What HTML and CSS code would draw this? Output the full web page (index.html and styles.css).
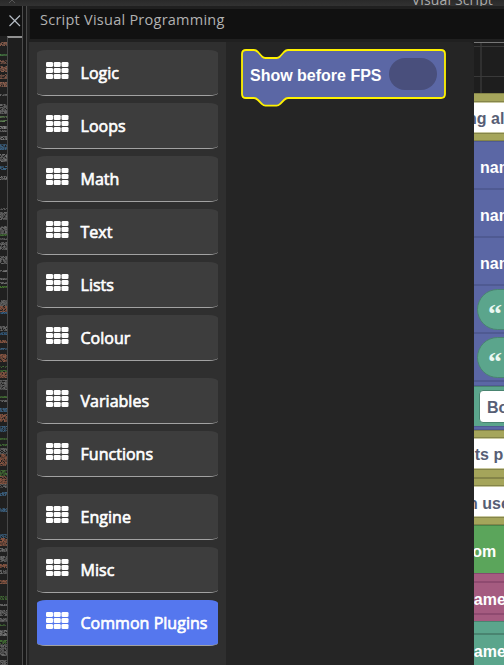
FILE: index.html
```html
<!DOCTYPE html>
<html lang="en">
<head>
<meta charset="utf-8">
<title>Script Visual Programming</title>
<link rel="stylesheet" href="styles.css">
</head>
<body>
<svg class="defs" width="0" height="0"><symbol id="grid" viewBox="0 0 23 18"><g fill="#fff"><rect x="0" y="0" width="7" height="5" rx="1.3"/><rect x="7.700" y="0" width="7" height="5" rx="1.3"/><rect x="15.500" y="0" width="7" height="5" rx="1.3"/><rect x="0" y="6" width="7" height="5" rx="1.3"/><rect x="7.700" y="6" width="7" height="5" rx="1.3"/><rect x="15.500" y="6" width="7" height="5" rx="1.3"/><rect x="0" y="12" width="7" height="5" rx="1.3"/><rect x="7.700" y="12" width="7" height="5" rx="1.3"/><rect x="15.500" y="12" width="7" height="5" rx="1.3"/></g></symbol></svg>
<div class="window">
  <header class="topbar">
    <svg class="notch" width="12" height="6" viewBox="0 0 12 6"><path d="M3 3 6 0 9 3" fill="none" stroke="#555"/></svg>
    <span class="window-title">Visual Script</span>
  </header>
  <div class="main">
    <aside class="editor">
      <div class="tab"><svg width="14" height="14" viewBox="0 0 14 14"><path d="M1.500 1.500 12 12M12 1.500 1.500 12" fill="none" stroke="#b5bcc4" stroke-width="1.2"/></svg></div>
      <div class="code"><svg class="minimap" id="minimap" width="7" height="629"></svg><div class="scroll"></div></div>
    </aside>
    <div class="splitter"></div>
    <section class="panel">
      <h1 class="title">Script Visual Programming</h1>
      <div class="workspace">
        <nav class="toolbox">
          <div class="cat"><svg><use href="#grid"/></svg><span>Logic</span></div>
          <div class="cat"><svg><use href="#grid"/></svg><span>Loops</span></div>
          <div class="cat"><svg><use href="#grid"/></svg><span>Math</span></div>
          <div class="cat"><svg><use href="#grid"/></svg><span>Text</span></div>
          <div class="cat"><svg><use href="#grid"/></svg><span>Lists</span></div>
          <div class="cat"><svg><use href="#grid"/></svg><span>Colour</span></div>
          <div class="cat gap"><svg><use href="#grid"/></svg><span>Variables</span></div>
          <div class="cat"><svg><use href="#grid"/></svg><span>Functions</span></div>
          <div class="cat gap"><svg><use href="#grid"/></svg><span>Engine</span></div>
          <div class="cat"><svg><use href="#grid"/></svg><span>Misc</span></div>
          <div class="cat selected"><svg><use href="#grid"/></svg><span>Common Plugins</span></div>
        </nav>
        <div class="flyout">
          <svg width="206" height="60" viewBox="0 0 206 60">
            <path d="M5 2H13Q15 2 17 4L21 8.500Q22.500 10 24.500 10H35.500Q37.500 10 39 8.500L43 4Q45 2 47 2H200Q204 2 204 6V46Q204 50 200 50H47Q45 50 43 52L39 56Q37.500 57.700 35.500 57.700H24.500Q22.500 57.700 21 56L17 52Q15 50 13 50H5Q1 50 1 46V6Q1 2 5 2Z" fill="#5b67a5" stroke="#fff200" stroke-width="1.8"/>
            <rect x="148" y="10" width="48" height="32" rx="16" fill="#494f7c"/>
            <text class="block-text" x="9" y="33" textLength="131.500">Show before FPS</text>
          </svg>
        </div>
        <div class="canvas">
          <div class="grid"></div>
          <div class="olive o1"></div>
          <div class="field f1"><span>ng all</span></div>
          <div class="olive o2"></div>
          <div class="blue">name</div>
          <div class="blue">name</div>
          <div class="blue">name</div>
          <div class="blue"><div class="pill">“</div></div>
          <div class="blue"><div class="pill">“</div></div>
          <div class="blue edge"></div>
          <div class="teal bool"><div class="input">Bo</div></div>
          <div class="blue foot"></div>
          <div class="olive o3"></div>
          <div class="field f2"><span>nts pr</span></div>
          <div class="olive o4"></div>
          <div class="olive o4"></div>
          <div class="field f3"><span>n use</span></div>
          <div class="olive o5"></div>
          <div class="green"><span>rom</span></div>
          <div class="pink"><span>name</span></div>
          <div class="teal last"><span>name</span></div>
        </div>
      </div>
    </section>
  </div>
</div>
<script src="script.js"></script>
</body>
</html>
```
FILE: styles.css
```css
* { box-sizing: border-box; }
body { margin: 0; background: #1e1e1e; overflow: hidden; font-family: "Open Sans", sans-serif; }
.defs { display: block; position: absolute; }
.window { width: 504px; height: 665px; overflow: hidden; display: flex; flex-direction: column; }
.topbar { height: 6px; flex: none; background: linear-gradient(#2a2a2a, #323232); display: flex; justify-content: space-between; align-items: flex-end; overflow: hidden; padding: 0 11px 0 6px; }
.window-title { color: #aaa; font-size: 14px; line-height: 20px; height: 20px; margin-bottom: -4px; letter-spacing: .15px; white-space: nowrap; }
.notch { flex: none; }
.main { flex: 1; display: flex; min-height: 0; }
.editor { width: 22px; display: flex; flex-direction: column; }
.tab { height: 30px; flex: none; background: #111; padding: 8px 0 0 8px; }
.tab svg { display: block; }
.code { flex: 1; display: flex; }
.minimap { flex: none; background: #202020; }
.scroll { flex: 1; border-left: 1px solid #474747; border-top: 2px solid #909090; background: #1e1e1e; }
.splitter { width: 5px; background: #181818; border: solid #4b4b4b; border-width: 0 1px; }
.panel { flex: 1; display: flex; flex-direction: column; background: #202020; min-width: 0; border-left: 2px solid #222; }
.title { flex: none; margin: 3px 0 0 1px; height: 30px; padding: 0 0 0 10px; background: #111; color: #b2b2b2; font-size: 14.5px; font-weight: 400; line-height: 22px; letter-spacing: .25px; white-space: nowrap; }
.workspace { flex: 1; display: flex; margin-top: 3px; min-height: 0; }
.toolbox { width: 197px; flex: none; background: #2f2f2f; padding: 8px 8px 0; display: flex; flex-direction: column; gap: 7px; }
.cat { height: 46px; flex: none; background: #3d3d3d; border-bottom: 1px solid #a2a2a2; border-radius: 9px / 3px; padding-left: 9px; display: flex; align-items: center; color: #fff; font-size: 16px; font-weight: 400; -webkit-text-stroke: .65px #fff; letter-spacing: .03px; white-space: nowrap; }
.cat svg { width: 23px; height: 18px; margin: 0 11.500px 3px 0; flex: none; }
.cat span { line-height: 22px; padding-top: 1px; }
.gap { margin-top: 10px; }
.selected { background: #5577ee; }
.flyout { width: 248px; flex: none; background: #252525; padding: 6px 0 0 15px; border-top-right-radius: 5px; }
.flyout svg { display: block; }
.block-text { font: bold 16px "Liberation Sans", sans-serif; fill: #fff; }
.canvas { width: 30px; flex: none; overflow: hidden; display: flex; flex-direction: column; color: #fff; font: bold 16px "Liberation Sans", sans-serif; }
.canvas > div { flex: none; white-space: nowrap; }
.grid { height: 51px; background: linear-gradient(#777, #777) 0 0/30px 1px no-repeat, linear-gradient(#393939, #393939) 0 4px/30px 1px no-repeat, linear-gradient(#393939, #393939) 0 34px/30px 1px no-repeat, linear-gradient(#303030, #303030) 6px 0/2px 52px no-repeat, #1e1e1e; }
.olive { background: #a5a55b; border: solid #858549; border-width: 1px 0; }
.o1 { height: 9px; }
.o2 { height: 8px; }
.o3 { height: 8px; }
.o4 { height: 9px; }
.o4 + .o4 { height: 8px; }
.o5 { height: 8px; }
.field { background: #fff; color: #575e75; display: flex; align-items: center; border: solid #c8c8a0; border-width: 1px 0; }
.f1 { height: 31px; padding-top: 3px; }
.f1 span { margin-left: -7px; }
.f2 { height: 31px; padding-top: 3px; }
.f2 span { margin-left: -9px; }
.f3 { height: 31px; padding-top: 4px; }
.f3 span { margin-left: -6px; }
.blue { height: 48px; background: #5b67a5; border: solid #4f5a92; border-width: 1px 0; padding: 0 0 0 6px; line-height: 51px; }
.blue:has(.pill) { padding: 3px 0 0 3px; }
.pill { width: 60px; height: 41px; border: 1px solid #4a8471; background: #5ba58c; border-radius: 21px; padding-left: 10px; color: #eaf8f2; font: bold 28px/47px "Liberation Serif", serif; }
.edge { height: 5px; }
.teal { background: #5ba58c; border-top: 1px solid #498470; }
.bool { height: 40px; padding: 3px 0 0 5px; }
.input { width: 40px; height: 33px; background: #fff; border: 1px solid #498470; border-radius: 4px; padding-left: 7px; color: #575e75; line-height: 34px; }
.foot { height: 4px; }
.green { height: 48px; background: #5ba55b; border-top: 1px solid #498449; line-height: 51px; }
.green span { margin-left: -8px; }
.pink { height: 48px; border-top: 1px solid #844970; background: linear-gradient(#8f4a70, #8f4a70) 0 7px/100% 2px no-repeat, linear-gradient(#8f4a70, #8f4a70) 0 39px/100% 2px no-repeat, #a55b80; line-height: 51px; }
.pink span, .last span { margin-left: -10px; }
.last { height: 45px; background: linear-gradient(#498470, #498470) 0 11px/100% 2px no-repeat, #5ba58c; line-height: 59px; }
```
FILE: script.js
```js
// Code minimap: [first row, last row, colour] for each run of lines.
const runs = [
  [42,45,"#a46d58"],[54,55,"#4f914b"],[60,63,"#956452"],[66,71,"#a46d58"],[74,78,"#956452"],[82,86,"#a46d58"],[94,95,"#777"],
  [104,113,"#777"],[116,117,"#6b965d"],[120,121,"#6b965d"],[126,128,"#999"],[130,131,"#777"],[136,139,"#888"],[144,149,"#427199"],[154,161,"#858585"],[166,169,"#4478a2"],[176,179,"#858585"],
  [208,209,"#666"],[212,219,"#777"],[226,233,"#777"],[234,235,"#497d38"],[238,239,"#666"],[242,249,"#777"],[256,263,"#777"],[270,271,"#888"],[278,279,"#888"],[282,283,"#888"],[286,287,"#4f8d35"],
  [300,305,"#777"],[306,311,"#a0624a"],[312,313,"#376b98"],[326,330,"#777"],[332,334,"#376b98"],[340,342,"#a0624a"],[348,349,"#427199"],[354,361,"#a0624a"],[366,367,"#497d38"],[370,371,"#497d38"],[372,377,"#a0624a"],[380,389,"#777"],[396,397,"#497d38"],
  [400,401,"#777"],[408,411,"#427199"],[414,421,"#a0624a"],[426,431,"#427199"],[438,439,"#497d38"],[444,445,"#497d38"],[448,453,"#777"],[454,465,"#a0624a"],[470,475,"#497d38"],[476,483,"#a0624a"],[484,487,"#777"],[492,495,"#427199"],[508,511,"#427199"],[534,537,"#427199"],[538,545,"#a0624a"],[548,551,"#777"],[556,561,"#777"],[564,567,"#a0624a"],[570,573,"#777"],[580,583,"#a0624a"],
  [596,599,"#497d38"],[604,605,"#888"],[610,615,"#777"],[618,621,"#777"],[624,625,"#497d38"],[630,635,"#888"],[640,643,"#497d38"],[644,655,"#777"],[660,664,"#777"]
];
let seed = 7;
const rand = () => (seed = (seed * 16807) % 2147483647) / 2147483647;
const map = document.getElementById("minimap");
for (const [from, to, colour] of runs) {
  for (let y = from; y <= to; y++) {
    for (let x = 0; x < 7; x++) {
      if (rand() < 0.12) continue;
      const r = document.createElementNS("http://www.w3.org/2000/svg", "rect");
      r.setAttribute("x", x);
      r.setAttribute("y", y - 36);
      r.setAttribute("width", 1);
      r.setAttribute("height", 1);
      r.setAttribute("fill", colour);
      r.setAttribute("opacity", (0.35 + rand() * 0.5).toFixed(2));
      map.appendChild(r);
    }
  }
}
```
